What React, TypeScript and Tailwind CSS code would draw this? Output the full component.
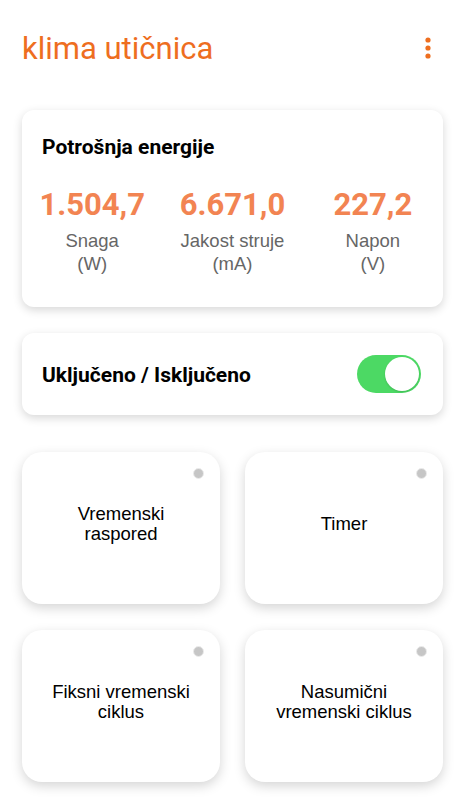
import React from "react";

type Metric = {
    value: string;
    label: string;
    unit: string;
};

const metrics: Metric[] = [
    { value: "1.504,7", label: "Snaga", unit: "(W)" },
    { value: "6.671,0", label: "Jakost struje", unit: "(mA)" },
    { value: "227,2", label: "Napon", unit: "(V)" },
];

const modes = [
    ["Vremenski", "raspored"],
    ["Timer"],
    ["Fiksni vremenski", "ciklus"],
    ["Nasumični", "vremenski ciklus"],
];

const roboto = "font-['Roboto','Liberation_Sans',sans-serif]";
const helv = "font-['Liberation_Sans','Arial',sans-serif]";

function Kebab() {
    return (
        <svg width="10" height="24" viewBox="0 0 10 24" className="text-[#ee6e1f]">
            <circle cx="5" cy="4" r="2.6" fill="currentColor" />
            <circle cx="5" cy="12" r="2.6" fill="currentColor" />
            <circle cx="5" cy="20" r="2.6" fill="currentColor" />
        </svg>
    );
}

function Toggle() {
    return (
        <div className="w-[64px] h-[38px] rounded-full bg-[#4cd964] p-[2px] flex justify-end">
            <div className="w-[34px] h-[34px] rounded-full bg-white shadow-[0_1px_2px_rgba(0,0,0,0.15)]" />
        </div>
    );
}

export default function App() {
    return (
        <div className="min-h-[800px] bg-white pl-[22px] pr-[31px]">
            <header className="h-[96px] flex items-center justify-between">
                <h1 className={`${roboto} text-[31px] leading-none text-[#ee6e1f]`}>klima utičnica</h1>
                <div className="mr-[10px]">
                    <Kebab />
                </div>
            </header>

            <div className="mt-[14px] rounded-[12px] bg-white shadow-[0_3px_10px_rgba(0,0,0,0.16)] pt-[26px] pb-[32px]">
                <p className={`${roboto} px-[20px] text-[21px] leading-[22px] font-bold text-black`}>
                    Potrošnja energije
                </p>
                <div className="grid grid-cols-3 mt-[29px]">
                    {metrics.map((m) => (
                        <div key={m.label} className="flex flex-col items-center">
                            <span className={`${roboto} text-[31px] leading-[36px] font-bold text-[#f28452]`}>
                                {m.value}
                            </span>
                            <span className={`${helv} mt-[6px] text-[18.5px] leading-[23px] text-[#666666]`}>
                                {m.label}
                            </span>
                            <span className={`${helv} text-[18.5px] leading-[23px] text-[#666666]`}>{m.unit}</span>
                        </div>
                    ))}
                </div>
            </div>

            <div className="mt-[26px] h-[82px] rounded-[12px] bg-white shadow-[0_3px_10px_rgba(0,0,0,0.16)] flex items-center justify-between pl-[20px] pr-[22px]">
                <span className={`${roboto} pt-[3px] text-[21px] font-bold text-black`}>Uključeno / Isključeno</span>
                <Toggle />
            </div>

            <div className="mt-[37px] grid grid-cols-2 gap-x-[25px] gap-y-[26px]">
                {modes.map((lines) => (
                    <div
                        key={lines.join(" ")}
                        className="relative h-[152px] rounded-[20px] bg-white shadow-[0_4px_12px_rgba(0,0,0,0.17)] flex flex-col items-center justify-center pb-[9px]"
                    >
                        <span className="absolute top-[16px] right-[16px] w-[11px] h-[11px] rounded-full bg-[#c6c6c6] border border-[#ececec]" />
                        {lines.map((l) => (
                            <span key={l} className={`${helv} text-[18.5px] leading-[20px] text-black text-center`}>
                                {l}
                            </span>
                        ))}
                    </div>
                ))}
            </div>
        </div>
    );
}
